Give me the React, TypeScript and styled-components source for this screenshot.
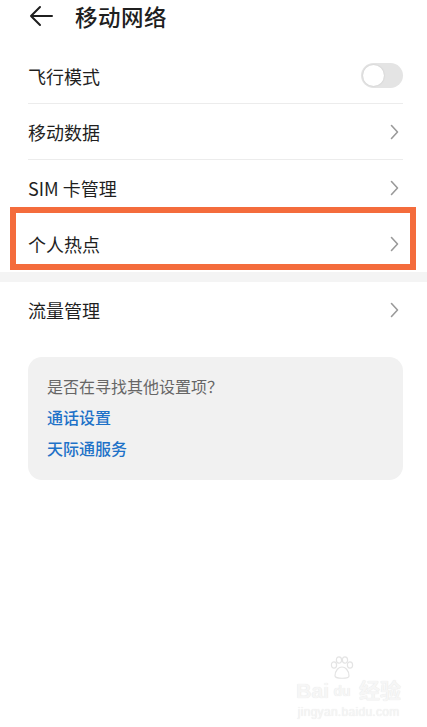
import React, { FC } from 'react';
import styled, { createGlobalStyle } from 'styled-components';

const GlobalStyle = createGlobalStyle`
  html, body {
    margin: 0;
    padding: 0;
    background: #fff;
  }
  body {
    font-family: "Noto Sans CJK SC", "Noto Sans", sans-serif;
    color: #1f1f1f;
  }
`;

const Page = styled.div`
  position: relative;
  width: 427px;
  height: 727px;
  overflow: hidden;
  background: #fff;
`;

const Header = styled.div`
  display: flex;
  align-items: center;
  height: 32px;
  padding-left: 29px;
  gap: 22px;
`;

const Title = styled.h1`
  margin: 0;
  font-size: 22.5px;
  font-weight: 500;
  color: #1f1f1f;
  letter-spacing: 0.5px;
`;

const List = styled.div`
  margin-top: 16px;
  padding: 0 24px 0 28px;
`;

const Row = styled.div<{ $divider?: boolean }>`
  position: relative;
  display: flex;
  align-items: center;
  justify-content: space-between;
  height: 56px;
  border-bottom: ${(p) => (p.$divider ? '1px solid #ececec' : 'none')};
  box-sizing: border-box;
`;

const Label = styled.span`
  font-size: 18px;
  color: #1f1f1f;
`;

const Toggle = styled.div`
  position: relative;
  width: 42px;
  height: 25px;
  border-radius: 13px;
  background: #e4e4e4;
`;

const Knob = styled.div`
  position: absolute;
  left: 2px;
  top: 2px;
  width: 21px;
  height: 21px;
  border-radius: 50%;
  background: #fff;
  box-shadow: 0 0 2px rgba(0, 0, 0, 0.15);
`;

const Highlight = styled.div`
  position: absolute;
  left: -18px;
  right: -13px;
  top: -9px;
  bottom: 2px;
  border: 6px solid #f46c3c;
  pointer-events: none;
`;

const Band = styled.div`
  height: 10px;
  background: #f4f4f4;
`;

const Card = styled.div`
  margin: 19px 24px 0 28px;
  padding: 18px 19px 21px;
  border-radius: 14px;
  background: #f1f1f1;
  display: flex;
  flex-direction: column;
  gap: 9px;
`;

const Hint = styled.span`
  font-size: 16px;
  color: #666;
  line-height: 22px;
`;

const Link = styled.span`
  font-size: 16px;
  font-weight: 500;
  color: #1e72c8;
  line-height: 22px;
`;

const Watermark = styled.div`
  position: absolute;
  right: 26px;
  bottom: 8px;
  display: flex;
  flex-direction: column;
  align-items: center;
  color: #f6f6f6;
  font-family: "Liberation Sans", "Noto Sans CJK SC", sans-serif;
  text-shadow: 0 0 1px #e0e0e0;
`;

const Brand = styled.div`
  display: flex;
  align-items: flex-end;
  font-size: 21px;
  font-weight: 700;
  line-height: 22px;
`;

const Domain = styled.div`
  font-size: 12px;
  letter-spacing: 0.3px;
  margin-top: 3px;
`;

const BackArrow: FC = () => (
  <svg width="24" height="22" viewBox="0 0 24 22" fill="none">
    <path d="M11 2 L2 11 L11 20 M2 11 H23" stroke="#1f1f1f" strokeWidth="2" strokeLinecap="round" strokeLinejoin="round" />
  </svg>
);

const Chevron: FC = () => (
  <svg width="9" height="16" viewBox="0 0 9 16" fill="none" style={{ marginRight: 4 }}>
    <path d="M1.5 1.5 L7.5 8 L1.5 14.5" stroke="#9a9a9a" strokeWidth="1.6" strokeLinecap="round" strokeLinejoin="round" />
  </svg>
);

const Paw: FC = () => (
  <svg width="26" height="24" viewBox="0 0 26 24" fill="none" stroke="#e4e4e4" strokeWidth="1.2">
    <ellipse cx="5" cy="9" rx="2.6" ry="3.2" />
    <ellipse cx="10" cy="4" rx="2.6" ry="3.2" />
    <ellipse cx="16" cy="4" rx="2.6" ry="3.2" />
    <ellipse cx="21" cy="9" rx="2.6" ry="3.2" />
    <path d="M6 20 C6 14 10 11 13 11 C16 11 20 14 20 20 C20 23 6 23 6 20 Z" />
  </svg>
);

const App: FC = () => (
  <Page>
    <GlobalStyle />
    <Header>
      <BackArrow />
      <Title>移动网络</Title>
    </Header>
    <List>
      <Row $divider>
        <Label>飞行模式</Label>
        <Toggle>
          <Knob />
        </Toggle>
      </Row>
      <Row $divider>
        <Label>移动数据</Label>
        <Chevron />
      </Row>
      <Row>
        <Label>SIM 卡管理</Label>
        <Chevron />
      </Row>
      <Row>
        <Label>个人热点</Label>
        <Chevron />
        <Highlight />
      </Row>
    </List>
    <Band />
    <List style={{ marginTop: 0 }}>
      <Row>
        <Label>流量管理</Label>
        <Chevron />
      </Row>
    </List>
    <Card>
      <Hint>是否在寻找其他设置项？</Hint>
      <Link>通话设置</Link>
      <Link>天际通服务</Link>
    </Card>
    <Watermark>
      <Brand>
        <span>Bai</span>
        <span style={{ display: 'flex', flexDirection: 'column', alignItems: 'center', fontSize: 14 }}>
          <Paw />
          du
        </span>
        <span style={{ marginLeft: 4 }}>经验</span>
      </Brand>
      <Domain>jingyan.baidu.com</Domain>
    </Watermark>
  </Page>
);

export default App;
